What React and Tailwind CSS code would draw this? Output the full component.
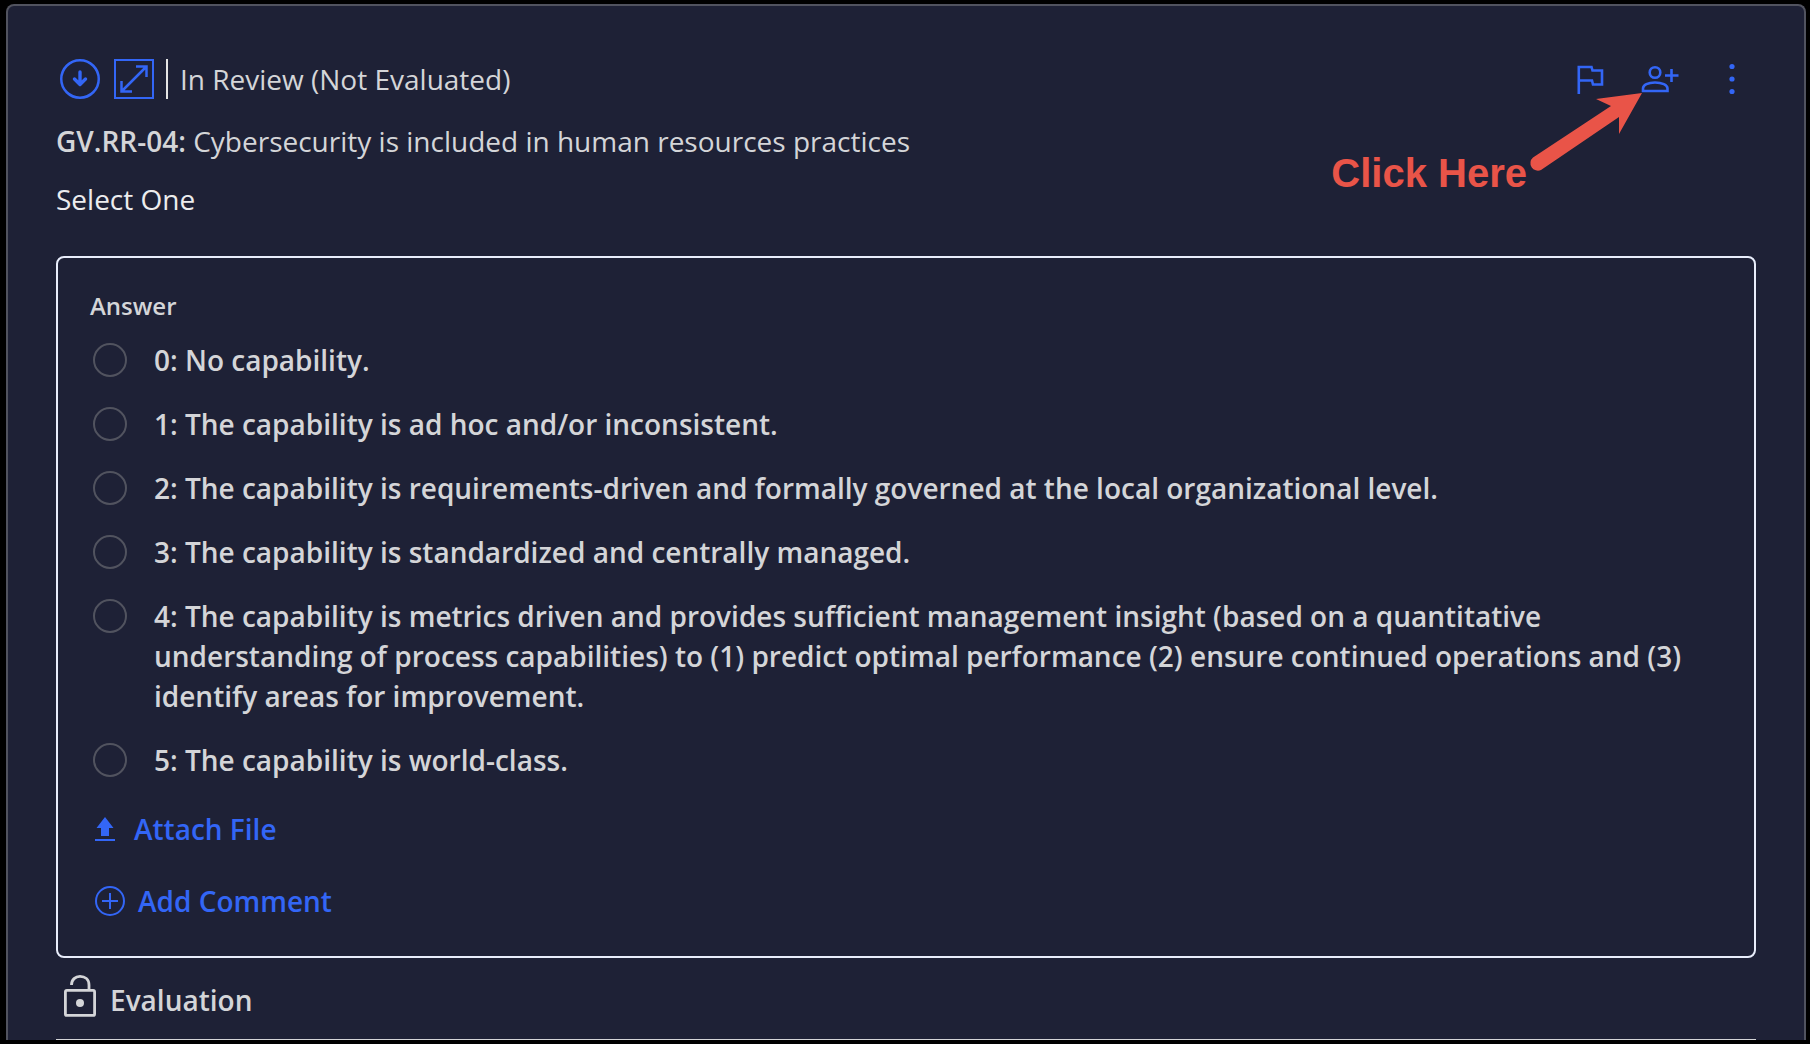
import React from "react";

const OPTIONS = [
  "0: No capability.",
  "1: The capability is ad hoc and/or inconsistent.",
  "2: The capability is requirements-driven and formally governed at the local organizational level.",
  "3: The capability is standardized and centrally managed.",
  "4: The capability is metrics driven and provides sufficient management insight (based on a quantitative understanding of process capabilities) to (1) predict optimal performance (2) ensure continued operations and (3) identify areas for improvement.",
  "5: The capability is world-class.",
];

function CircleDown() {
  return (
    <svg className="size-10" viewBox="0 0 40 40" fill="none" stroke="currentColor">
      <circle cx="20" cy="20" r="18.75" strokeWidth="2.5" />
      <path d="M20 13V25.500M14.500 20L20 25.500L25.500 20" strokeWidth="3.400" strokeLinecap="round" strokeLinejoin="round" />
    </svg>
  );
}

function Expand() {
  return (
    <svg className="size-10" viewBox="0 0 40 40" fill="none" stroke="currentColor" strokeWidth="2">
      <rect x="1" y="1" width="38" height="38" />
      <path d="M7.500 32.500L32.500 7.500M22 7.500H32.500V18M7.500 22V32.500H18" strokeWidth="2.500" />
    </svg>
  );
}

function Flag() {
  return (
    <svg className="h-8 w-7" viewBox="0 0 28 32" fill="none" stroke="currentColor" strokeWidth="2.600">
      <path d="M2.800 31V4H15.500L16.500 7.500H26V21.500H17L16 17.500H2.800" />
    </svg>
  );
}

function UserPlus() {
  return (
    <svg className="h-8 w-10" viewBox="0 0 40 32" fill="none" stroke="currentColor" strokeWidth="2.600">
      <circle cx="15" cy="9.500" r="5.300" />
      <path d="M3 28V25.500C3 22 8 19.500 15 19.500S27.500 22 27.500 25.500V28ZM31.500 6V19M25 12.500H38.500" />
    </svg>
  );
}

function Dots() {
  return (
    <svg className="h-8 w-2" viewBox="0 0 8 32" fill="currentColor">
      <circle cx="4" cy="3.500" r="2.600" />
      <circle cx="4" cy="16" r="2.600" />
      <circle cx="4" cy="28.500" r="2.600" />
    </svg>
  );
}

function Callout() {
  return (
    <div className="pointer-events-none absolute right-[113px] top-[34px] flex items-start text-[#e95448]">
      <span className="mt-[60px] whitespace-nowrap font-['Liberation_Sans',Arial,sans-serif] text-[40px] font-bold leading-10">
        Click Here
      </span>
      <svg className="h-20 w-[116px]" viewBox="0 0 116 80" fill="currentColor">
        <path d="M115 0L69 6L84 13L6 64.500A7.500 7.500 0 0 0 14 77L92 24V41Z" />
      </svg>
    </div>
  );
}

export default function App() {
  return (
    <div className="min-h-screen bg-black px-1 py-1 font-['Open_Sans',sans-serif] text-[28px] leading-10 text-[#d4d5d8]">
      <main className="ml-0.5 h-[calc(100vh-8px)] overflow-hidden rounded-t-lg border-2 border-b-0 border-[#51535f] bg-[#1e2136] px-12 pt-[53px]">
        <header className="relative flex items-start text-[#3366f6]">
          <div className="flex gap-3.5 pl-1">
            <button aria-label="Collapse" className="size-10"><CircleDown /></button>
            <button aria-label="Expand" className="size-10"><Expand /></button>
          </div>
          <div className="ml-3 h-10 w-0.5 bg-[#e5e5e5]" />
          <p className="ml-3 grow text-[#d4d5d8]">In Review (Not Evaluated)</p>
          <div className="flex h-10 items-center gap-9 pr-5">
            <button aria-label="Flag"><Flag /></button>
            <button aria-label="Assign user"><UserPlus /></button>
            <button aria-label="More options" className="pl-3"><Dots /></button>
          </div>
          <Callout />
        </header>

        <h1 className="mt-[22px]">
          <b className="font-semibold">GV.RR-04:</b> Cybersecurity is included in human resources practices
        </h1>
        <p className="mt-[18px] text-[#ececee]">Select One</p>

        <section className="mt-[37px] rounded-lg border-2 border-[#e8edfb] px-8 pb-[35px] pt-8 font-semibold">
          <fieldset>
            <legend className="text-[24px] leading-8">Answer</legend>
            <div className="mt-[18px] flex flex-col gap-6">
              {OPTIONS.map((text) => (
                <label key={text} className="flex items-start">
                  <input
                    type="radio"
                    name="answer"
                    className="ml-[3px] mt-[3px] size-[34px] shrink-0 appearance-none rounded-full border-2 border-[#51535f] checked:border-[#3366f6] checked:bg-[#3366f6]"
                  />
                  <span className="ml-[27px]">{text}</span>
                </label>
              ))}
            </div>
          </fieldset>

          <div className="mt-[29px] flex flex-col items-start gap-8 pl-[5px] text-[#3366f6]">
            <button className="flex items-center gap-[19px]">
              <svg className="h-6 w-5" viewBox="0 0 20 24" fill="currentColor">
                <path d="M10 0L18.500 11H14V19H6V11H1.500ZM0 22H20V24H0Z" />
              </svg>
              Attach File
            </button>
            <button className="flex items-center gap-[13px]">
              <svg className="size-[30px]" viewBox="0 0 30 30" fill="none" stroke="currentColor" strokeWidth="2">
                <circle cx="15" cy="15" r="14" />
                <path d="M15 7V23M7 15H23" />
              </svg>
              Add Comment
            </button>
          </div>
        </section>

        <div className="mt-4 flex items-end border-b border-[#d4d5d8] pb-[19px] font-semibold">
          <svg className="mx-2 mb-0.5 h-11 w-8" viewBox="0 0 32 44" fill="none" stroke="currentColor" strokeWidth="2.800">
            <rect x="1.400" y="16.400" width="29.200" height="25" rx="1.500" />
            <path d="M7.500 11C7.500 5.500 11.500 2.400 16 2.400C21 2.400 25 5.500 25 11V16" />
            <circle cx="16" cy="29" r="4" fill="currentColor" stroke="none" />
          </svg>
          <h2 className="ml-1.5">Evaluation</h2>
        </div>
      </main>
    </div>
  );
}
